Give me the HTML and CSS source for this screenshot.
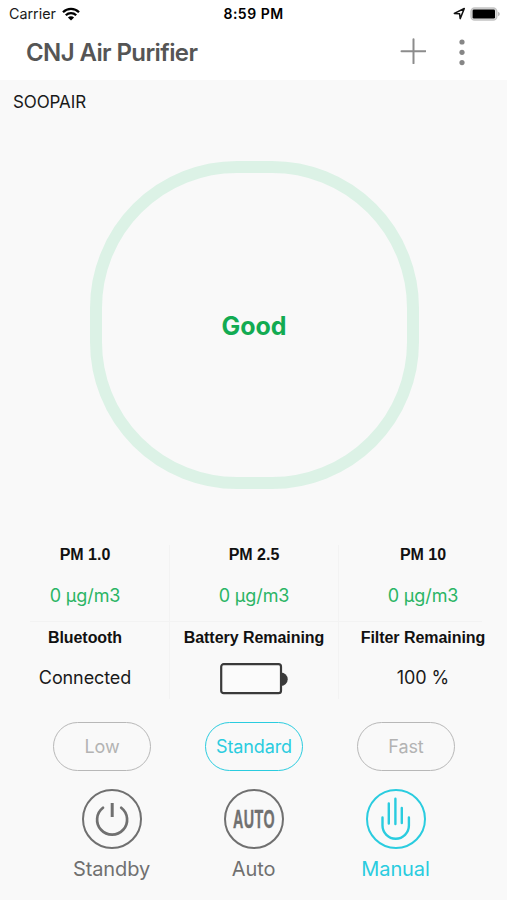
FILE: index.html
```html
<!DOCTYPE html>
<html lang="en">
<head>
    <meta charset="UTF-8">
    <meta name="viewport" content="width=device-width, initial-scale=1.0">
    <title>CNJ Air Purifier</title>
    <link rel="stylesheet" href="styles.css">
</head>
<body>
    <div class="status-bar">
        <div class="status-left">
            <span class="carrier">Carrier</span>
            <svg class="wifi" width="18" height="14" viewBox="0 0 18 14">
                <path d="M1 5.2a11.4 11.4 0 0 1 16 0M3.8 8.2a7.4 7.4 0 0 1 10.4 0" fill="none" stroke="#000" stroke-width="2.3"/>
                <path d="M5.9 10.5a4.4 4.4 0 0 1 6.2 0L9 13.6z"/>
            </svg>
        </div>
        <span class="time">8:59 PM</span>
        <div class="status-right">
            <svg width="13" height="13" viewBox="0 0 13 13">
                <path d="M1.3 6.4L11.3 1.5L7.2 11.6L6.6 6.8z" fill="none" stroke="#111" stroke-width="1.5" stroke-linejoin="round"/>
            </svg>
            <svg width="30" height="14" viewBox="0 0 30 14">
                <rect x="1" y="1" width="25.8" height="12" rx="3.6" fill="#ddd" stroke="#c4c4c4" stroke-width="1.4"/>
                <rect x="2.6" y="2.4" width="22.4" height="9.2" rx="1.4"/>
                <path d="M28 4.7q1.9.8 1.9 2.3t-1.9 2.3z" fill="#bdbdbd"/>
            </svg>
        </div>
    </div>

    <header>
        <h1>CNJ Air Purifier</h1>
        <div class="actions">
            <svg width="26" height="26" viewBox="0 0 26 26">
                <path d="M13.5 1.2v24M1.5 13.2h24" stroke="#8c8c8c" stroke-width="2" stroke-linecap="round"/>
            </svg>
            <svg width="6" height="28" viewBox="0 0 6 28" fill="#868686">
                <circle cx="3" cy="4" r="2.6"/>
                <circle cx="3" cy="14.3" r="2.6"/>
                <circle cx="3" cy="24.6" r="2.6"/>
            </svg>
        </div>
    </header>

    <p class="device">SOOPAIR</p>

    <div class="ring">
        <span class="quality">Good</span>
    </div>

    <div class="stats">
        <div class="stat">
            <h2>PM 1.0</h2>
            <p class="good">0 µg/m3</p>
        </div>
        <div class="stat">
            <h2>PM 2.5</h2>
            <p class="good">0 µg/m3</p>
        </div>
        <div class="stat">
            <h2>PM 10</h2>
            <p class="good">0 µg/m3</p>
        </div>
        <div class="divider"></div>
        <div class="stat info">
            <h2>Bluetooth</h2>
            <p>Connected</p>
        </div>
        <div class="stat info">
            <h2>Battery Remaining</h2>
            <svg class="battery" width="68" height="32" viewBox="0 0 68 32">
                <path d="M61 9.5a6.7 6.7 0 0 1 0 13.4z" fill="#3a3a3a"/>
                <rect x="1.2" y="1.2" width="59.8" height="29" rx="2.5" fill="#fbfbfb" stroke="#3a3a3a" stroke-width="2.2"/>
            </svg>
        </div>
        <div class="stat info">
            <h2>Filter Remaining</h2>
            <p class="percent">100 %</p>
        </div>
    </div>

    <div class="speeds">
        <button type="button">Low</button>
        <button type="button" class="active">Standard</button>
        <button type="button">Fast</button>
    </div>

    <div class="modes">
        <div class="mode">
            <svg width="60" height="60" viewBox="0 0 60 60">
                <circle cx="30" cy="30" r="29"/>
                <path d="M21 18.7a15 15 0 1 0 18.2 0" stroke-width="2.7" stroke-linecap="round"/>
                <path d="M30.2 14v14" stroke-width="3"/>
            </svg>
            <span class="standby">Standby</span>
        </div>
        <div class="mode">
            <svg width="60" height="60" viewBox="0 0 60 60">
                <circle cx="30" cy="30" r="29"/>
                <text class="auto-text" transform="translate(30 39) scale(.55 1)" text-anchor="middle">AUTO</text>
            </svg>
            <span>Auto</span>
        </div>
        <div class="mode active">
            <svg width="60" height="60" viewBox="0 0 60 60">
                <circle cx="30" cy="30" r="29"/>
                <path d="M16.5 28.5V36.5a13.2 13.2 0 0 0 26.4 0V28.5M22.8 14.5v20M29.4 9.8V35M35.8 19v15" stroke-width="2.4" stroke-linecap="round"/>
            </svg>
            <span>Manual</span>
        </div>
    </div>
</body>
</html>
```
FILE: styles.css
```css
* {
    box-sizing: border-box;
}

body {
    font-family: Inter, "Liberation Sans", sans-serif;
    margin: 0;
    height: 900px;
    overflow: hidden;
    background-color: #f9f9f9;
    color: #1a1a1a;
}

h1, h2, p {
    margin: 0;
}

svg {
    display: block;
}

.status-bar {
    display: grid;
    grid-template-columns: 1fr auto 1fr;
    align-items: center;
    height: 27px;
    padding: 0 7px 0 9px;
    background-color: #fff;
    font-size: 14px;
}

.status-left, .status-right {
    display: flex;
    align-items: center;
    gap: 6px;
}

.carrier {
    font-size: 14.3px;
}

.status-right {
    justify-content: flex-end;
    gap: 4px;
}

.time {
    margin-right: 2px;
    font-weight: 600;
    letter-spacing: 0.5px;
    color: #000;
}

header {
    display: flex;
    justify-content: space-between;
    height: 53px;
    padding: 11px 42px 0 26px;
    background-color: #fff;
}

h1 {
    font-size: 24px;
    line-height: 29px;
    font-weight: 600;
    letter-spacing: -0.6px;
    color: #555;
}

.actions {
    display: flex;
    gap: 33px;
}

.device {
    height: 81px;
    padding: 12px 13px 0;
    font-size: 17px;
    line-height: 21px;
    letter-spacing: -0.1px;
}

.ring {
    display: flex;
    justify-content: center;
    align-items: center;
    width: 329px;
    height: 328px;
    margin: 0 0 0 90px;
    padding: 2px 1px 0 0;
    border: 12px solid #dcf2e6;
    border-radius: 147px;
}

.quality {
    font-size: 25px;
    font-weight: 700;
    color: #12ab52;
}

.stats {
    display: grid;
    grid-template-columns: repeat(3, 169px);
    grid-template-rows: 76px 1px 77px;
    margin: 56px 0 0 1px;
}

.stat {
    display: flex;
    flex-direction: column;
    align-items: center;
    border-right: 1px solid #f3f3f3;
}

.stat:nth-child(3), .stat:last-child {
    padding-right: 1px;
    border-right: none;
}

.stat h2 {
    margin-bottom: 20px;
    font-family: "Liberation Sans", Arial, sans-serif;
    font-size: 16px;
    line-height: 20px;
    font-weight: 700;
    color: #111;
    white-space: nowrap;
}

.stat p {
    font-size: 18px;
    line-height: 22px;
    letter-spacing: -0.1px;
}

.stat .good {
    color: #2bb565;
}

.divider {
    grid-column: 1 / -1;
    margin: 0 26px 0 29px;
    background-color: #f3f3f3;
}

.info {
    padding-top: 6px;
}

.info h2 {
    margin-bottom: 19px;
    letter-spacing: -0.05px;
}

.info .battery {
    margin-top: -4px;
}

.speeds {
    display: flex;
    justify-content: space-between;
    margin: 23px 52px 0 53px;
}

.speeds button {
    width: 98px;
    height: 49px;
    padding: 0;
    border: 1.5px solid #b8b8b8;
    border-radius: 25px;
    background: none;
    font-family: inherit;
    font-size: 18px;
    letter-spacing: -0.1px;
    color: #b3b3b3;
}

.speeds .active {
    border-color: #2accdf;
    color: #2accdf;
}

.modes {
    display: grid;
    grid-template-columns: repeat(3, 142px);
    justify-content: center;
    margin-top: 18px;
}

.mode {
    display: flex;
    flex-direction: column;
    align-items: center;
    font-size: 20px;
    line-height: 26px;
    letter-spacing: -0.1px;
    color: #707070;
}

.mode svg {
    margin-bottom: 7px;
    fill: none;
    stroke: currentColor;
    stroke-width: 2;
}

.mode .auto-text {
    font-family: "Liberation Sans", sans-serif;
    font-size: 26px;
    font-weight: 700;
    letter-spacing: 0.8px;
    fill: currentColor;
    stroke-width: 0.4;
}

.mode.active {
    color: #2accdf;
}
```
